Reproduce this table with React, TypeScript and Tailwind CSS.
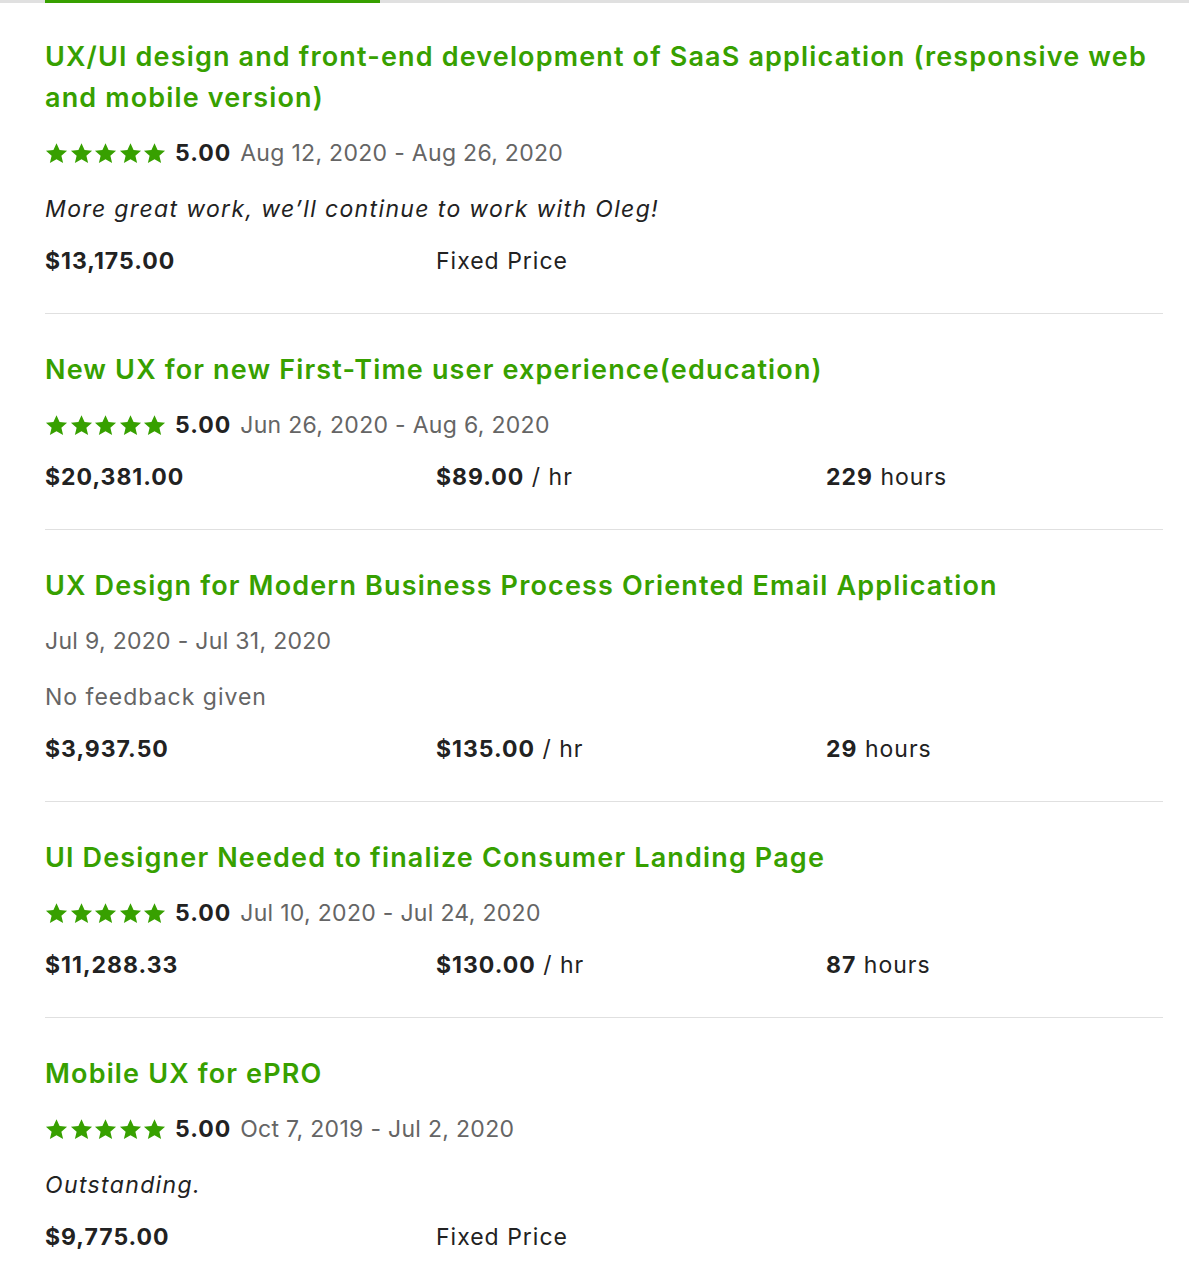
import { Fragment } from 'react';

interface Job {
  title: string;
  rating?: string;
  dates: string;
  comment?: string;
  noFeedback?: boolean;
  total: string;
  rate?: string;
  hours?: string;
}

const jobs: Job[] = [
  {
    title: 'UX/UI design and front-end development of SaaS application (responsive web and mobile version)',
    rating: '5.00',
    dates: 'Aug 12, 2020 - Aug 26, 2020',
    comment: 'More great work, we\u2019ll continue to work with Oleg!',
    total: '$13,175.00',
  },
  {
    title: 'New UX for new First-Time user experience(education)',
    rating: '5.00',
    dates: 'Jun 26, 2020 - Aug 6, 2020',
    total: '$20,381.00',
    rate: '$89.00',
    hours: '229',
  },
  {
    title: 'UX Design for Modern Business Process Oriented Email Application',
    dates: 'Jul 9, 2020 - Jul 31, 2020',
    noFeedback: true,
    total: '$3,937.50',
    rate: '$135.00',
    hours: '29',
  },
  {
    title: 'UI Designer Needed to finalize Consumer Landing Page',
    rating: '5.00',
    dates: 'Jul 10, 2020 - Jul 24, 2020',
    total: '$11,288.33',
    rate: '$130.00',
    hours: '87',
  },
  {
    title: 'Mobile UX for ePRO',
    rating: '5.00',
    dates: 'Oct 7, 2019 - Jul 2, 2020',
    comment: 'Outstanding.',
    total: '$9,775.00',
  },
];

const Star = () => (
  <svg width="23" height="23" viewBox="0 0 24 24" className="shrink-0">
    <path
      d="M12 1.2l3.2 7.2 7.8.7-5.9 5.2 1.8 7.7L12 18l-6.9 4 1.8-7.7L1 9.1l7.8-.7z"
      fill="#37a000"
    />
  </svg>
);

const JobItem = ({ job }: { job: Job }) => (
  <div className="pt-[35px] pb-[37px]">
    <h3 className="text-[27px] leading-[41px] font-semibold text-[#37a000] tracking-[1.15px]">
      {job.title}
    </h3>
    <div className="mt-[20px] h-[30px] flex items-center">
      {job.rating && (
        <>
          <div className="flex gap-[1.5px] mr-[9px]">
            {[0, 1, 2, 3, 4].map((i) => (
              <Star key={i} />
            ))}
          </div>
          <span className="font-bold text-[#222] mr-[9px]">{job.rating}</span>
        </>
      )}
      <span className="text-[#656565] tracking-[0.3px]">{job.dates}</span>
    </div>
    {job.comment && (
      <div className="mt-[26px] h-[30px] leading-[30px] italic text-[#222] tracking-[1.35px]">
        {job.comment}
      </div>
    )}
    {job.noFeedback && (
      <div className="mt-[26px] h-[30px] leading-[30px] text-[#656565]">No feedback given</div>
    )}
    <div className="mt-[22px] h-[30px] leading-[30px] flex text-[#222]">
      <div className="w-[391px] font-bold">{job.total}</div>
      {job.rate ? (
        <>
          <div className="w-[390px]">
            <span className="font-bold">{job.rate}</span> / hr
          </div>
          <div>
            <span className="font-bold">{job.hours}</span> hours
          </div>
        </>
      ) : (
        <div>Fixed Price</div>
      )}
    </div>
  </div>
);

export default function App() {
  return (
    <div className="w-[1189px] min-h-[1280px] bg-white text-[23px] tracking-[1px] font-['Inter','Liberation_Sans',sans-serif]">
      <div className="h-[3px] bg-[#e0e0e0] flex">
        <div className="ml-[45px] w-[335px] h-[3px] bg-[#37a000]" />
      </div>
      <div className="pl-[45px] pr-[26px] -mt-[2px]">
        {jobs.map((job, i) => (
          <Fragment key={i}>
            {i > 0 && <div className="h-px bg-[#e0e0e0]" />}
            <JobItem job={job} />
          </Fragment>
        ))}
      </div>
    </div>
  );
}
